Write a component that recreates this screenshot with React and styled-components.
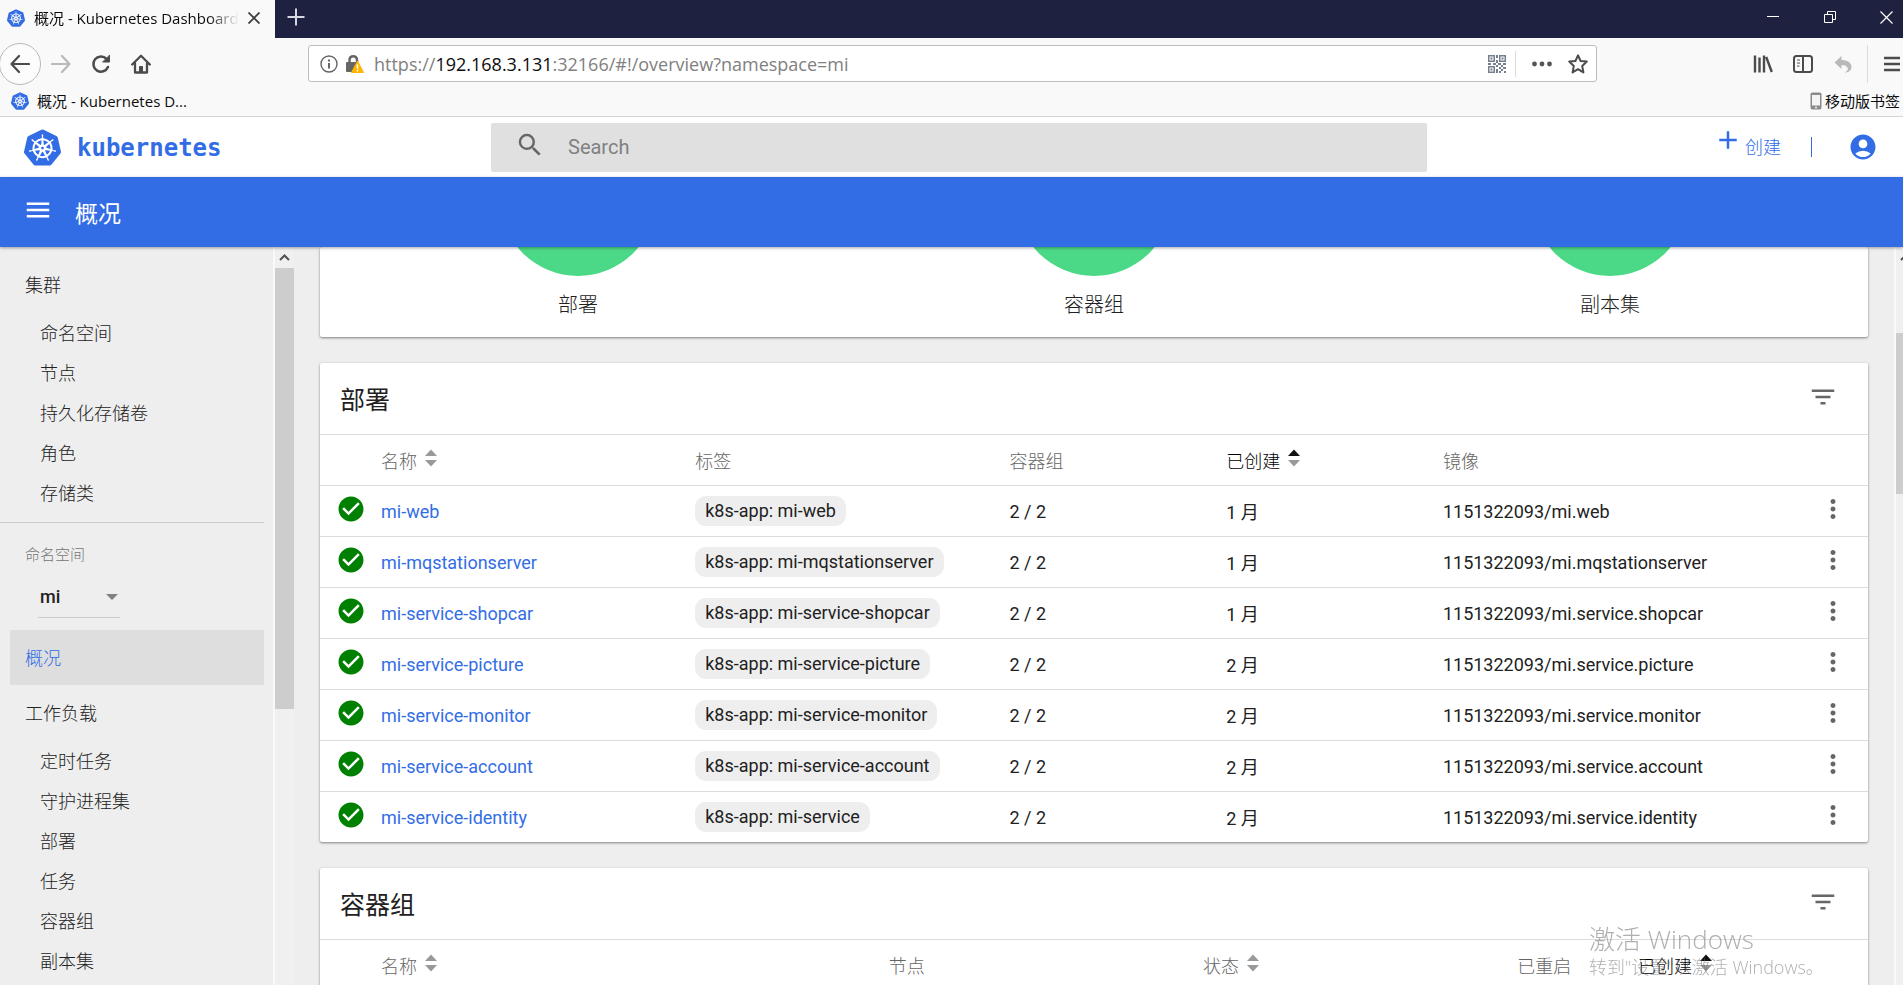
import React from "react";
import styled, { createGlobalStyle } from "styled-components";
import { SiKubernetes } from "react-icons/si";
import {
  MdAccountCircle,
  MdAdd,
  MdCheckCircle,
  MdFilterList,
  MdMenu,
  MdMoreVert,
  MdSearch,
} from "react-icons/md";

const GlobalStyle = createGlobalStyle`
  * {
    box-sizing: border-box;
  }
  body {
    margin: 0;
    font-family: Roboto, "Noto Sans CJK SC", sans-serif;
    font-size: 18px;
    color: #212121;
    background: #eee;
  }
  button, input, select {
    font: inherit;
    color: inherit;
    border: 0;
    padding: 0;
    background: none;
  }
  button svg {
    display: block;
  }
  a {
    text-decoration: none;
  }
`;

const Page = styled.div`
  height: 100vh;
  display: flex;
  flex-direction: column;
  overflow: hidden;
`;

/* ---------- browser window ---------- */

const Browser = styled.div`
  flex: none;
  font-family: "Open Sans", "Noto Sans CJK SC", sans-serif;
  font-size: 15px;
  color: #0c0c0d;
  background: #f9f9fa;
  border-bottom: 1px solid #d4d4d4;
`;

const TabStrip = styled.div`
  height: 38px;
  display: flex;
  background: #1f2140;
  color: #d8d8e0;
`;

const Tab = styled.div`
  width: 275px;
  padding: 0 15px 3px 7px;
  display: flex;
  align-items: center;
  gap: 9px;
  background: #f9f9fa;
  color: #0c0c0d;
`;

const TabTitle = styled.span`
  flex: 1;
  min-width: 0;
  overflow: hidden;
  white-space: nowrap;
  mask-image: linear-gradient(to right, #000 85%, transparent 100%);
`;

const TabIcon = styled(SiKubernetes)`
  flex: none;
  width: 18px;
  height: 18px;
  color: #326de6;
`;

const StripButton = styled.button`
  width: ${({ $width }) => $width}px;
  height: 34px;
  display: flex;
  align-items: center;
  justify-content: center;
`;

const WindowButtons = styled.div`
  margin-left: auto;
  display: flex;
  color: #fff;
`;

const CloseWindow = styled(StripButton)`
  padding-left: 11px;
`;

const Toolbar = styled.div`
  height: 51px;
  display: flex;
  align-items: center;
  color: #4b4b4d;
`;

const NavButtons = styled.div`
  width: 308px;
  display: flex;
  align-items: center;
`;

const ToolButton = styled.button`
  width: 40px;
  height: 40px;
  display: flex;
  align-items: center;
  justify-content: center;
  color: ${({ $faded }) => ($faded ? "#b9b9ba" : "inherit")};
`;

const BackButton = styled(ToolButton)`
  width: 42px;
  height: 42px;
  margin-left: -1px;
  border: 1px solid #b9b9ba;
  border-radius: 50%;
  background: #fcfcfc;
`;

const UrlBar = styled.div`
  flex: 1;
  min-width: 0;
  height: 37px;
  padding: 0 0 0 11px;
  display: flex;
  align-items: center;
  background: #fff;
  border: 1px solid #bdbdbd;
  border-radius: 3px;
`;

const UrlText = styled.span`
  flex: 1;
  min-width: 0;
  margin-left: 10px;
  overflow: hidden;
  white-space: nowrap;
  font-size: 18px;
  color: #808080;

  b {
    font-weight: 400;
    color: #0c0c0d;
  }
`;

const LockIcon = styled.svg`
  margin-left: 7px;
`;

const UrlButton = styled.button`
  width: 36px;
  height: 34px;
  display: flex;
  align-items: center;
  justify-content: center;
`;

const Divider = styled.span`
  width: 1px;
  height: ${({ $height }) => $height}px;
  background: ${({ $color }) => $color || "#dcdcdc"};
`;

const UrlDivider = styled(Divider)`
  margin-right: 8px;
`;

const ToolbarRight = styled.div`
  width: 306px;
  display: flex;
  align-items: center;
  justify-content: flex-end;
`;

const ToolbarDivider = styled(Divider)`
  margin-left: 4px;
`;

const MenuButton = styled(ToolButton)`
  width: 35px;
  padding-left: 12px;
`;

const Bookmarks = styled.div`
  height: 27px;
  padding: 0 3px 4px 11px;
  display: flex;
  align-items: center;
  justify-content: space-between;
`;

const Bookmark = styled.a`
  display: flex;
  align-items: center;
  gap: ${({ $gap }) => $gap}px;
  color: #0c0c0d;
`;

/* ---------- dashboard header ---------- */

const Header = styled.header`
  flex: none;
  height: 60px;
  display: flex;
  align-items: center;
  background: #fff;
  color: #326de6;
`;

const Brand = styled.a`
  width: 491px;
  padding-left: 24px;
  display: flex;
  align-items: center;
  gap: 16px;
  font-family: "DejaVu Sans Mono", monospace;
  font-size: 24px;
  font-weight: 700;
  color: #326de6;

  span {
    padding-top: 2px;
  }
`;

const SearchBox = styled.label`
  flex: 1;
  height: 49px;
  padding-left: 24px;
  display: flex;
  align-items: center;
  gap: 23px;
  background: #e0e0e0;
  border-radius: 2px;
  color: #666;

  svg {
    flex: none;
    margin-bottom: 5px;
  }
  input {
    flex: 1;
    min-width: 0;
    outline: 0;
    font-size: 20px;
  }
  input::placeholder {
    color: #808080;
    opacity: 1;
  }
`;

const HeaderActions = styled.div`
  width: 476px;
  padding-right: 25px;
  display: flex;
  align-items: center;
  justify-content: flex-end;
`;

const CreateButton = styled.button`
  margin-right: 30px;
  padding-bottom: 2px;
  display: flex;
  align-items: center;
  gap: 2px;
  font-weight: 300;

  svg {
    margin-bottom: 12px;
  }
`;

const AccountButton = styled.button`
  margin-left: 36px;
`;

const TitleBar = styled.div`
  flex: none;
  height: 70px;
  padding-left: 23px;
  display: flex;
  align-items: center;
  gap: 22px;
  background: #326de6;
  color: #fff;
  box-shadow: 0 1px 3px rgba(0, 0, 0, 0.35);
  z-index: 1;

  h1 {
    margin: 0;
    font-size: 23px;
    font-weight: 400;
  }
  button {
    margin-bottom: 4px;
  }
`;

/* ---------- sidebar ---------- */

const Body = styled.div`
  flex: 1;
  min-height: 0;
  display: flex;
`;

const Sidebar = styled.nav`
  width: 273px;
  flex: none;
  padding: 10px 9px 0 0;
  overflow: hidden;
  font-weight: 300;
`;

const NavGroup = styled.a`
  height: 55px;
  margin-left: 10px;
  padding: 0 0 2px 15px;
  display: flex;
  align-items: center;
  color: ${({ $active }) => ($active ? "#326de6" : "#212121")};
  background: ${({ $active }) => ($active ? "#dedede" : "none")};
`;

const NavItem = styled.a`
  height: 40px;
  padding-left: 40px;
  display: flex;
  align-items: center;
  color: #212121;
`;

const NamespaceBox = styled.div`
  margin-top: 10px;
  padding: 21px 0 12px;
  border-top: 1px solid #ccc;

  label {
    display: block;
    padding-left: 25px;
    line-height: 22px;
    font-size: 15px;
    color: #757575;
  }
`;

const SelectWrap = styled.div`
  width: 82px;
  margin: 10px 0 0 38px;
  position: relative;
  border-bottom: 1px solid #ccc;

  select {
    width: 100%;
    height: 41px;
    padding-left: 2px;
    appearance: none;
    font-weight: 500;
  }
  svg {
    position: absolute;
    right: 2px;
    top: 18px;
    pointer-events: none;
  }
`;

const ScrollRail = styled.div`
  width: ${({ $width }) => $width}px;
  flex: none;
  display: flex;
  flex-direction: column;
  overflow: hidden;
  background: #f0f0f0;
  border-left: 2px solid #f9f9f9;

  svg {
    flex: none;
  }
`;

const ScrollThumb = styled.div`
  flex: none;
  height: ${({ $height }) => $height}px;
  margin-top: ${({ $top }) => $top}px;
  background: #cdcdcd;
`;

/* ---------- cards and tables ---------- */

const Main = styled.main`
  flex: 1;
  min-width: 0;
  padding: 0 26px;
  display: flex;
  flex-direction: column;
  gap: 26px;
  overflow: hidden;
`;

const Card = styled.section`
  flex: none;
  background: #fff;
  border-radius: 2px;
  box-shadow: 0 1px 3px rgba(0, 0, 0, 0.3), 0 1px 2px rgba(0, 0, 0, 0.2);
`;

const PieRow = styled(Card)`
  height: 90px;
  display: flex;
`;

const PieItem = styled.div`
  flex: 1;
  display: flex;
  flex-direction: column;
  align-items: center;
  font-size: 20px;
  font-weight: 300;
  line-height: 30px;
`;

/* only the bottom of each pie is scrolled into view */
const PieWindow = styled.div`
  height: 29px;
  margin-bottom: 14px;
  display: flex;
  align-items: flex-end;
  overflow: hidden;

  svg {
    flex: none;
  }
`;

const CardHead = styled.div`
  height: 71px;
  padding: 0 30px 0 20px;
  display: flex;
  align-items: center;
  justify-content: space-between;

  h2 {
    margin: 0 0 2px;
    font-size: 25px;
    font-weight: 400;
  }
  button {
    margin-bottom: 4px;
    color: #666;
  }
`;

const Table = styled.table`
  width: 100%;
  table-layout: fixed;
  border-collapse: separate;
  border-spacing: 0;

  th,
  td {
    height: 51px;
    padding: 0;
    border-top: 1px solid #dcdcdc;
    text-align: left;
    font-weight: 400;
    white-space: nowrap;
  }
  th {
    font-weight: 300;
  }
  a {
    color: #326de6;
  }
`;

const Th = styled.th`
  color: ${({ $active }) => ($active ? "#000" : "#666")};
`;

const HeadLabel = styled.div`
  display: flex;
  align-items: center;
  gap: 8px;

  svg {
    margin-bottom: 5px;
  }
`;

const StatusIcon = styled(MdCheckCircle)`
  display: block;
  width: 30px;
  height: 30px;
  margin: 0 0 4px 16px;
  color: #008000;
`;

const Chip = styled.span`
  display: inline-block;
  padding: 0 10px;
  line-height: 30px;
  border-radius: 11px;
  background: #eee;
`;

const RowMenu = styled.button`
  display: block;
  margin: 0 20px 4px auto;
  color: #666;
`;

const Watermark = styled.div`
  position: fixed;
  right: 80px;
  bottom: 4px;
  z-index: 2;
  width: 234px;
  font-family: "Open Sans", "Noto Sans CJK SC", sans-serif;
  font-weight: 300;
  font-size: 18px;
  line-height: 28px;
  white-space: nowrap;
  color: rgba(110, 110, 110, 0.55);
  pointer-events: none;

  strong {
    display: block;
    font-size: 26px;
    font-weight: 300;
  }
`;

const clusterItems = ["命名空间", "节点", "持久化存储卷", "角色", "存储类"];
const workloadItems = ["定时任务", "守护进程集", "部署", "任务", "容器组", "副本集"];
const pies = ["部署", "容器组", "副本集"];

const deployments = [
  { name: "mi-web", label: "mi-web", age: "1 月", image: "mi.web" },
  { name: "mi-mqstationserver", label: "mi-mqstationserver", age: "1 月", image: "mi.mqstationserver" },
  { name: "mi-service-shopcar", label: "mi-service-shopcar", age: "1 月", image: "mi.service.shopcar" },
  { name: "mi-service-picture", label: "mi-service-picture", age: "2 月", image: "mi.service.picture" },
  { name: "mi-service-monitor", label: "mi-service-monitor", age: "2 月", image: "mi.service.monitor" },
  { name: "mi-service-account", label: "mi-service-account", age: "2 月", image: "mi.service.account" },
  { name: "mi-service-identity", label: "mi-service", age: "2 月", image: "mi.service.identity" },
];

const Stroke = ({ size = 20, width = 2, children }) => (
  <svg
    width={size}
    height={size}
    viewBox="0 0 20 20"
    fill="none"
    stroke="currentColor"
    strokeWidth={width}
    strokeLinecap="round"
    strokeLinejoin="round"
  >
    {children}
  </svg>
);

const SortArrows = ({ active }) => (
  <svg width="12" height="18" viewBox="0 0 12 18">
    <path d="M0 7L6 0.5L12 7Z" fill={active ? "#111" : "#999"} />
    <path d="M0 11L6 17.5L12 11Z" fill="#999" />
  </svg>
);

const ScrollArrow = () => (
  <svg width="19" height="21" viewBox="0 0 19 21" fill="none" stroke="#505050" strokeWidth="2">
    <path d="M5 13L9.5 8.5L14 13" />
  </svg>
);

const QrFinder = ({ x, y }) => (
  <g>
    <rect x={x + 0.75} y={y + 0.75} width="5.5" height="5.5" fill="none" stroke="currentColor" strokeWidth="1.5" />
    <rect x={x + 2.5} y={y + 2.5} width="2" height="2" fill="currentColor" />
  </g>
);

const QrIcon = () => (
  <svg width="18" height="18" viewBox="0 0 18 18" color="#75808c">
    <QrFinder x={0} y={0} />
    <QrFinder x={11} y={0} />
    <QrFinder x={0} y={11} />
    <path
      fill="currentColor"
      d="M8 0h2v3H8zM8 5h2v3H8zM0 8h3v2H0zM5 8h3v2H5zM10 8h3v2h-3zM15 8h3v2h-3zM8 10h2v2H8zM13 10h2v2h-2zM11 12h2v2h-2zM15 12h3v2h-3zM8 14h2v4H8zM13 14h2v2h-2zM11 16h2v2h-2zM16 16h2v2h-2z"
    />
  </svg>
);

const SortHeader = ({ children, active, sortable }) => (
  <Th $active={active}>
    <HeadLabel>
      {children}
      {sortable && <SortArrows active={active} />}
    </HeadLabel>
  </Th>
);

const BrowserChrome = () => (
  <Browser>
    <TabStrip>
      <Tab>
        <TabIcon />
        <TabTitle>概况 - Kubernetes Dashboard</TabTitle>
        <button aria-label="关闭标签页">
          <svg width="12" height="12" viewBox="0 0 12 12" stroke="#3c3c3e" strokeWidth="1.8">
            <path d="M0.5 0.5L11.5 11.5M11.5 0.5L0.5 11.5" />
          </svg>
        </button>
      </Tab>
      <StripButton $width={41} aria-label="新标签页">
        <svg width="18" height="18" viewBox="0 0 18 18" stroke="currentColor" strokeWidth="2">
          <path d="M9 0.5V17.5M0.5 9H17.5" />
        </svg>
      </StripButton>
      <WindowButtons>
        <StripButton $width={57} aria-label="最小化">
          <svg width="12" height="12" viewBox="0 0 12 12" stroke="currentColor">
            <path d="M0 5.5H12" />
          </svg>
        </StripButton>
        <StripButton $width={57} aria-label="还原">
          <svg width="12" height="12" viewBox="0 0 12 12" fill="none" stroke="currentColor">
            <path d="M0.5 3.5H8.5V11.5H0.5ZM3.5 3.5V0.5H11.5V8.5H8.5" />
          </svg>
        </StripButton>
        <CloseWindow $width={45} aria-label="关闭">
          <svg width="13" height="13" viewBox="0 0 13 13" stroke="currentColor" strokeWidth="1.2">
            <path d="M0.5 0.5L12.5 12.5M12.5 0.5L0.5 12.5" />
          </svg>
        </CloseWindow>
      </WindowButtons>
    </TabStrip>

    <Toolbar>
      <NavButtons>
        <BackButton aria-label="后退">
          <Stroke width={2.2}>
            <path d="M19 10H1.5M9 2L1.5 10L9 18" />
          </Stroke>
        </BackButton>
        <ToolButton $faded aria-label="前进">
          <Stroke width={2.2}>
            <path d="M1 10H18.5M11 2L18.5 10L11 18" />
          </Stroke>
        </ToolButton>
        <ToolButton aria-label="刷新">
          <Stroke width={2.5}>
            <path d="M17 13A7.6 7.6 0 1 1 15.5 4.8" />
            <path d="M18.5 1.5V8H12Z" fill="currentColor" strokeWidth="1" />
          </Stroke>
        </ToolButton>
        <ToolButton aria-label="主页">
          <Stroke width={2.3}>
            <path d="M1.2 10.5L10 1.8L18.8 10.5M4 9.5V18.5H16V9.5" />
            <path d="M8.5 18V12.5H11.5V18Z" fill="currentColor" strokeWidth="1" />
          </Stroke>
        </ToolButton>
      </NavButtons>

      <UrlBar>
        <svg width="18" height="18" viewBox="0 0 18 18" fill="none" stroke="#666" strokeWidth="1.4">
          <circle cx="9" cy="9" r="8" />
          <path d="M9 8V13.5M9 4.5V6.5" strokeWidth="2" />
        </svg>
        <LockIcon width="19" height="20" viewBox="0 0 19 20">
          <path d="M4.5 9V5.5A3.8 3.8 0 0 1 12 5.5V8" fill="none" stroke="#666" strokeWidth="2.4" />
          <rect x="1" y="8" width="12" height="10" rx="1" fill="#666" />
          <path d="M12.5 7L18.5 18.5H6.5Z" fill="#ffb400" stroke="#ffb400" strokeLinejoin="round" />
          <path d="M12.5 10.5V14.5M12.5 15.8V17.4" stroke="#fff" strokeWidth="1.5" />
        </LockIcon>
        <UrlText>
          https://<b>192.168.3.131</b>:32166/#!/overview?namespace=mi
        </UrlText>
        <UrlButton aria-label="二维码">
          <QrIcon />
        </UrlButton>
        <UrlDivider $height={26} />
        <UrlButton aria-label="页面操作">
          <svg width="20" height="6" viewBox="0 0 20 6" fill="#555">
            <circle cx="2.5" cy="3" r="2.4" />
            <circle cx="10" cy="3" r="2.4" />
            <circle cx="17.5" cy="3" r="2.4" />
          </svg>
        </UrlButton>
        <UrlButton aria-label="收藏">
          <Stroke>
            <path d="M10 1.3L12.6 7L18.8 7.6L14.2 11.9L15.4 18.4L10 15.2L4.6 18.4L5.8 11.9L1.2 7.6L7.4 7Z" />
          </Stroke>
        </UrlButton>
      </UrlBar>

      <ToolbarRight>
        <ToolButton aria-label="书签库">
          <svg width="20" height="20" viewBox="0 0 20 20" stroke="currentColor" strokeWidth="2.4">
            <path d="M2 1.5V18.5M6.5 3.5V18.5M11 1.5V18.5M13.2 3L18.8 18" />
          </svg>
        </ToolButton>
        <ToolButton aria-label="侧栏">
          <Stroke>
            <rect x="1" y="2" width="18" height="16" rx="2.5" />
            <path d="M10 2V18" />
            <path d="M4.5 6H6.5M4.5 9H6.5M4.5 12H6" strokeWidth="1.2" />
          </Stroke>
        </ToolButton>
        <ToolButton $faded aria-label="撤销">
          <svg width="20" height="20" viewBox="0 0 20 20" fill="currentColor">
            <path d="M8.5 2V6C14 6 18.5 8.5 18.5 13C18.5 16 16 18.5 12 18.5C14.5 17 15.5 15.5 14.5 13.5C13.5 11.8 11 11 8.5 11V15L1.5 8.5Z" />
          </svg>
        </ToolButton>
        <ToolbarDivider $height={38} />
        <MenuButton aria-label="打开菜单">
          <svg width="16" height="16" viewBox="0 0 16 16" stroke="currentColor" strokeWidth="2.4">
            <path d="M0 2H16M0 8H16M0 14H16" />
          </svg>
        </MenuButton>
      </ToolbarRight>
    </Toolbar>

    <Bookmarks>
      <Bookmark href="#overview" $gap={8}>
        <TabIcon />
        概况 - Kubernetes D...
      </Bookmark>
      <Bookmark href="#mobile" $gap={3}>
        <svg width="12" height="18" viewBox="0 0 12 18">
          <rect x="0.5" y="0.5" width="11" height="17" rx="2" fill="#8a8a8c" />
          <rect x="2" y="3" width="8" height="10.5" fill="#f4f4f4" />
          <circle cx="6" cy="15.5" r="1" fill="#f4f4f4" />
        </svg>
        移动版书签
      </Bookmark>
    </Bookmarks>
  </Browser>
);

const SideNav = () => (
  <Sidebar>
    <NavGroup href="#cluster">集群</NavGroup>
    {clusterItems.map((item) => (
      <NavItem key={item} href="#cluster">
        {item}
      </NavItem>
    ))}
    <NamespaceBox>
      <label htmlFor="namespace">命名空间</label>
      <SelectWrap>
        <select id="namespace" defaultValue="mi">
          <option value="mi">mi</option>
        </select>
        <svg width="12" height="6" viewBox="0 0 12 6">
          <path d="M0 0H12L6 6Z" fill="#808080" />
        </svg>
      </SelectWrap>
    </NamespaceBox>
    <NavGroup href="#overview" $active>
      概况
    </NavGroup>
    <NavGroup href="#workloads">工作负载</NavGroup>
    {workloadItems.map((item) => (
      <NavItem key={item} href="#workloads">
        {item}
      </NavItem>
    ))}
  </Sidebar>
);

const CardTitle = ({ children }) => (
  <CardHead>
    <h2>{children}</h2>
    <button aria-label="筛选">
      <MdFilterList size={30} />
    </button>
  </CardHead>
);

const Deployments = () => (
  <Card>
    <CardTitle>部署</CardTitle>
    <Table>
      <colgroup>
        <col width="61" />
        <col width="20.3%" />
        <col width="20.3%" />
        <col width="14%" />
        <col width="14%" />
        <col />
        <col width="70" />
      </colgroup>
      <thead>
        <tr>
          <Th />
          <SortHeader sortable>名称</SortHeader>
          <SortHeader>标签</SortHeader>
          <SortHeader>容器组</SortHeader>
          <SortHeader sortable active>
            已创建
          </SortHeader>
          <SortHeader>镜像</SortHeader>
          <Th />
        </tr>
      </thead>
      <tbody>
        {deployments.map(({ name, label, age, image }) => (
          <tr key={name}>
            <td>
              <StatusIcon />
            </td>
            <td>
              <a href={`#${name}`}>{name}</a>
            </td>
            <td>
              <Chip>k8s-app: {label}</Chip>
            </td>
            <td>2 / 2</td>
            <td>{age}</td>
            <td>1151322093/{image}</td>
            <td>
              <RowMenu aria-label="操作">
                <MdMoreVert size={30} />
              </RowMenu>
            </td>
          </tr>
        ))}
      </tbody>
    </Table>
  </Card>
);

const Pods = () => (
  <Card>
    <CardTitle>容器组</CardTitle>
    <Table>
      <colgroup>
        <col width="61" />
        <col width="32.8%" />
        <col width="20.3%" />
        <col width="20.3%" />
        <col width="7.8%" />
        <col />
      </colgroup>
      <thead>
        <tr>
          <Th />
          <SortHeader sortable>名称</SortHeader>
          <SortHeader>节点</SortHeader>
          <SortHeader sortable>状态</SortHeader>
          <SortHeader>已重启</SortHeader>
          <SortHeader sortable active>
            已创建
          </SortHeader>
        </tr>
      </thead>
    </Table>
  </Card>
);

const App = () => {
  return (
    <Page>
      <GlobalStyle />
      <BrowserChrome />

      <Header>
        <Brand href="#home">
          <SiKubernetes size={37} />
          <span>kubernetes</span>
        </Brand>
        <SearchBox>
          <MdSearch size={30} />
          <input type="text" placeholder="Search" aria-label="Search" />
        </SearchBox>
        <HeaderActions>
          <CreateButton>
            <MdAdd size={30} />
            创建
          </CreateButton>
          <Divider $height={20} $color="#326de6" />
          <AccountButton aria-label="账户">
            <MdAccountCircle size={30} />
          </AccountButton>
        </HeaderActions>
      </Header>

      <TitleBar>
        <button aria-label="菜单">
          <MdMenu size={30} />
        </button>
        <h1>概况</h1>
      </TitleBar>

      <Body>
        <SideNav />
        <ScrollRail $width={21}>
          <ScrollArrow />
          <ScrollThumb $height={441} $top={0} />
        </ScrollRail>
        <Main>
          <PieRow>
            {pies.map((title) => (
              <PieItem key={title}>
                <PieWindow>
                  <svg width="156" height="156" viewBox="0 0 156 156">
                    <circle cx="78" cy="78" r="78" fill="#4cd987" />
                  </svg>
                </PieWindow>
                {title}
              </PieItem>
            ))}
          </PieRow>
          <Deployments />
          <Pods />
        </Main>
        <ScrollRail $width={9}>
          <ScrollArrow />
          <ScrollThumb $height={161} $top={65} />
        </ScrollRail>
      </Body>

      <Watermark>
        <strong>激活 Windows</strong>
        转到"设置"以激活 Windows。
      </Watermark>
    </Page>
  );
};

export default App;
